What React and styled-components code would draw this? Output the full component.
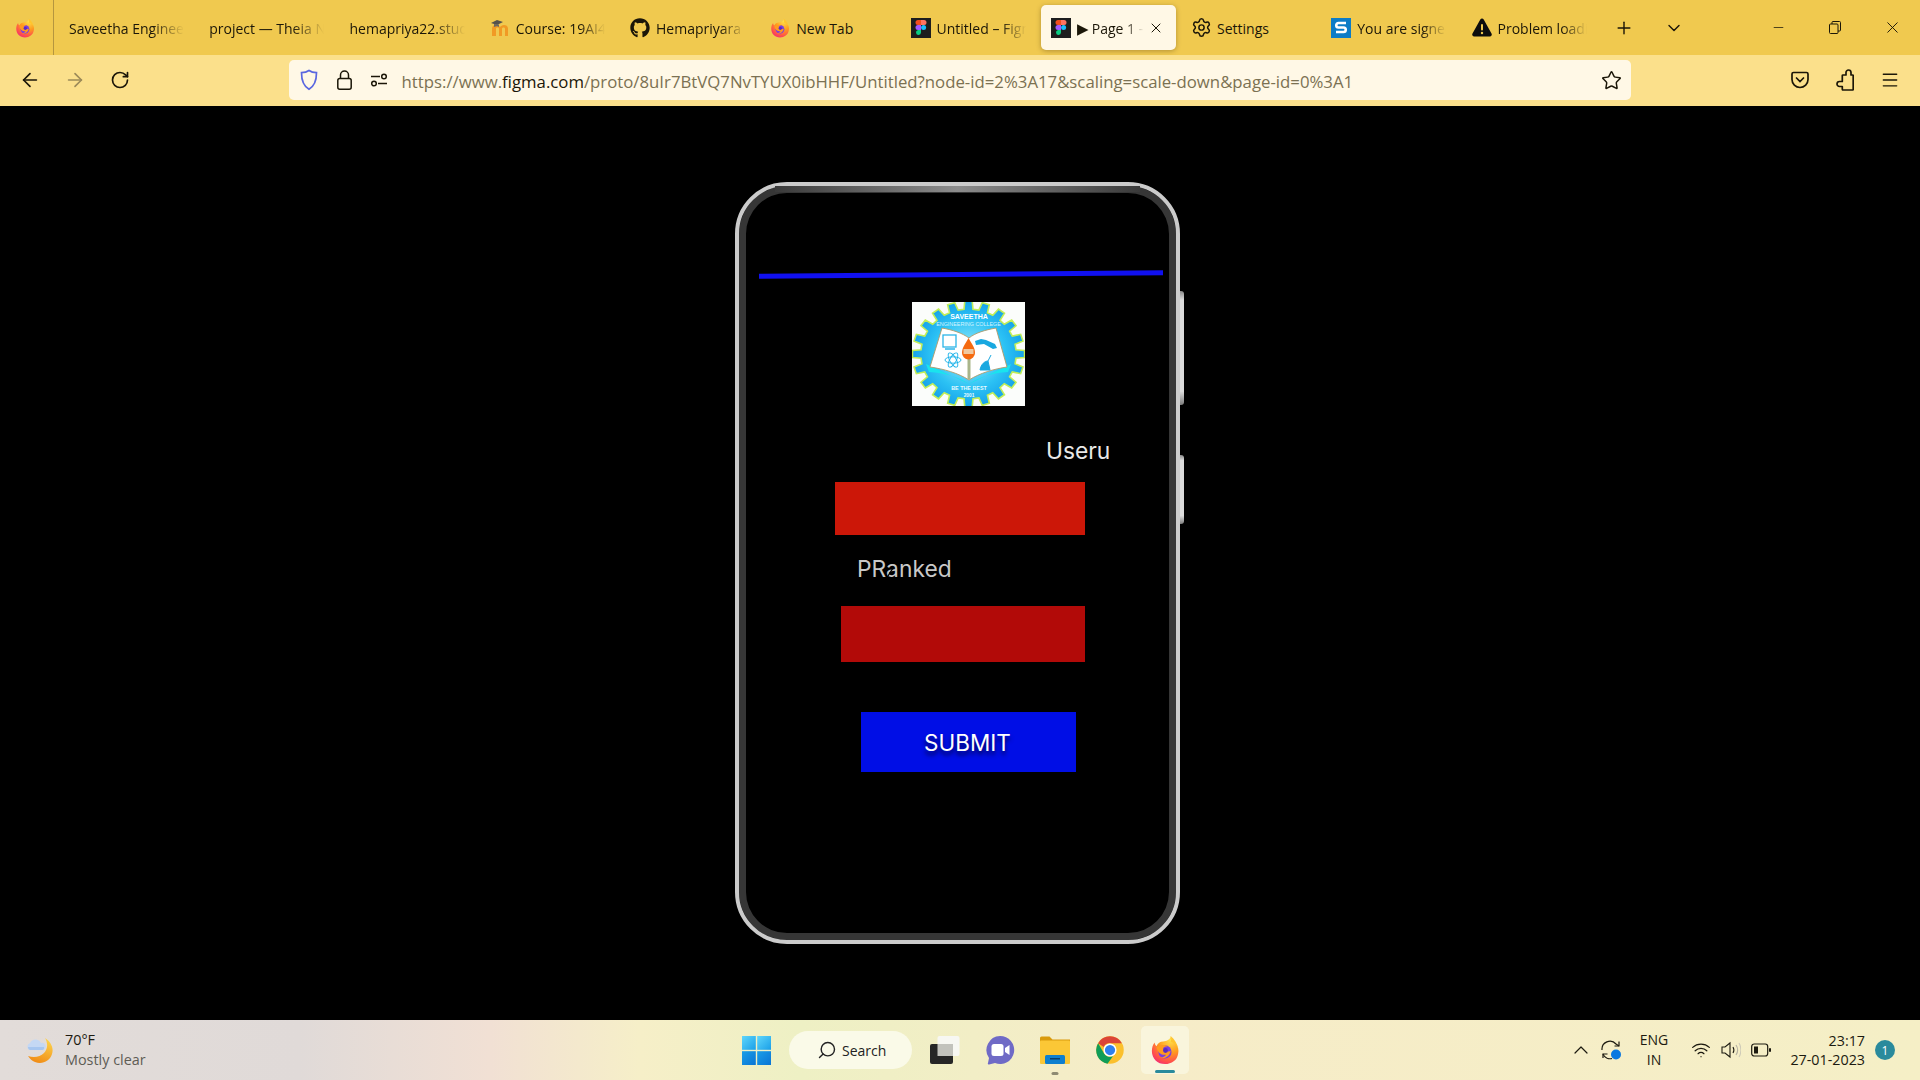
import React from "react";
import styled, { createGlobalStyle } from "styled-components";
import { ArrowLeft, ArrowRight, RotateCw, Star, Menu, Plus, ChevronDown, ChevronUp, Minus, X, Settings, Search, Wifi } from "lucide-react";
import { FaGithub } from "react-icons/fa";

const Global = createGlobalStyle`
  html, body { margin: 0; padding: 0; background: #000; }
  * { box-sizing: border-box; }
  body { font-family: "Open Sans", "Noto Sans", sans-serif; }
  svg { flex: none; }
`;

const Page = styled.div`
  width: 1920px; height: 1080px; display: flex; flex-direction: column; overflow: hidden; background: #000;
`;

/* ---------- browser chrome ---------- */
const TabBar = styled.div`
  height: 55px; flex: none; display: flex; align-items: center; background: #f0c94f; color: #1b1608;
`;
const FirefoxSlot = styled.div`
  width: 54px; height: 55px; flex: none; display: flex; align-items: center; justify-content: center;
  border-right: 1px solid #b5963f; padding-right: 4px;
`;
const TabStrip = styled.div`
  display: flex; gap: 5.25px; margin-left: 5px; height: 45px;
`;
const Tab = styled.div`
  width: 135px; height: 45px; flex: none; display: flex; align-items: center; gap: 6px; padding: 0 10px;
  font-size: 14px; border-radius: 5px; white-space: nowrap;
  background: ${p => (p.$active ? "#fff8e6" : "transparent")};
  box-shadow: ${p => (p.$active ? "0 1px 5px rgba(60,40,0,.35)" : "none")};
`;
const FavSlot = styled.span`
  width: 20px; height: 20px; flex: none; display: flex; align-items: center; justify-content: center;
`;
const TabLabel = styled.span`
  flex: 1; min-width: 0; overflow: hidden; line-height: 20px; position: relative; top: 1px;
  mask-image: ${p => (p.$clear ? "none" : "linear-gradient(to right, #000 72%, transparent 100%)")};
`;
const PlayGlyph = styled.span`
  font-size: 15px; margin-right: 3px;
`;
const TabClose = styled.span`
  width: 16px; flex: none; display: flex; align-items: center; justify-content: center; margin: 0 2px 0 -2px;
`;
const StripButton = styled.div`
  width: ${p => p.$w}px; margin-left: ${p => p.$ml || 0}px; height: 40px; flex: none; display: flex; align-items: center; justify-content: center;
`;
const NavBar = styled.div`
  height: 51px; flex: none; display: flex; align-items: flex-start; padding: 5px 7.5px 0; background: #fbe08b; color: #1b1608;
`;
const NavButton = styled.div`
  width: 45px; height: 40px; flex: none; display: flex; align-items: center; justify-content: center;
  color: ${p => (p.$dim ? "#9c8a58" : "#1b1608")};
`;
const UrlBar = styled.div`
  width: 1342px; height: 40px; margin-left: 146px; flex: none; display: flex; align-items: center;
  background: #fff8e6; border-radius: 5px; padding-left: 11px;
`;
const UrlIcon = styled.span`
  width: ${p => p.$w}px; margin-right: ${p => p.$mr}px; flex: none; display: flex; align-items: center; justify-content: center;
`;
const UrlText = styled.div`
  font-size: 16.77px; color: #7b7152; white-space: nowrap; flex: 1; position: relative; top: 1px;
  b { font-weight: 400; color: #1b1608; }
`;
const StarSlot = styled.span`
  width: 22px; margin-right: 8px; flex: none; display: flex; justify-content: center;
`;
const NavRight = styled.div`
  display: flex; margin-left: 146.5px;
`;

/* ---------- page ---------- */
const Stage = styled.main`
  flex: 1; min-height: 0; background: #000; padding: 76px 0 0 735px;
`;
const Phone = styled.div`
  position: relative; width: 445px; height: 762px; display: flex; flex-direction: column; align-items: flex-start;
  border: 4px solid #cbcbcb; border-radius: 52px; background: #000;
  box-shadow: inset 0 0 0 7px #363636;
  &::before {
    content: ""; position: absolute; top: 0; left: 36px; right: 36px; height: 6px;
    background: linear-gradient(90deg, #3a3a3a, #8c8c8c 50%, #3a3a3a);
  }
`;
const SideKey = styled.span`
  position: absolute; left: 441px; top: ${p => p.$top}px; width: 4px; height: ${p => p.$h}px;
  background: linear-gradient(180deg, #8a8a8a, #dcdcdc 8%, #dcdcdc 88%, #7c7c7c);
  border-radius: 0 3px 3px 0;
`;
const TopLine = styled.div`
  width: 404px; height: 5px; margin: 86px 0 0 20px; background: #1010f0; transform: rotate(-0.48deg); flex: none;
`;
const Logo = styled.svg`
  width: 113px; height: 104px; margin: 25px 0 0 173px; flex: none; display: block; background: #fbfdfb;
`;
const FieldLabel = styled.div`
  font-family: Inter, "Open Sans", sans-serif; font-size: 22.8px; line-height: 28px; flex: none;
  color: ${p => p.$c}; margin: ${p => p.$mt}px 0 0 ${p => p.$ml}px; position: relative;
`;
const CursorMark = styled.svg`
  position: absolute; left: 30px; top: 11px; width: 7px; height: 11px;
`;
const Field = styled.div`
  flex: none; background: ${p => p.$c}; width: ${p => p.$w}px; height: ${p => p.$h}px; margin: ${p => p.$mt}px 0 0 ${p => p.$ml}px;
`;
const Submit = styled.div`
  width: 215px; height: 60px; flex: none; margin: 50px 0 0 122px; background: #000ee6; color: #fff;
  display: flex; align-items: center; justify-content: center; padding-right: 2px;
  font-family: Inter, "Open Sans", sans-serif; font-size: 22.5px; text-shadow: 0 4px 4px rgba(0,0,40,.8);
`;

/* ---------- taskbar ---------- */
const Taskbar = styled.footer`
  height: 60px; flex: none; display: flex; align-items: center; color: #1c1a10;
  background: linear-gradient(90deg, #e2dcd9 0, #e0dad8 300px, #f1e0d4 490px, #f6efc8 640px, #eef0c4 800px, #f6ecc8 1150px, #f5efc6 1920px);
`;
const Weather = styled.div`
  width: 742px; flex: none; padding-left: 26px; display: flex; align-items: center; gap: 11px;
`;
const WeatherText = styled.div`
  font-size: 14.4px; line-height: 20px; color: #1c1a10;
  small { display: block; font-size: 14.4px; color: #5e5c55; }
`;
const WinLogo = styled.svg`
  width: 29px; height: 29px; flex: none; display: block;
`;
const SearchPill = styled.div`
  width: 123px; height: 38px; margin: 0 9px 0 18px; flex: none; display: flex; align-items: center; gap: 5px; padding-left: 28px;
  background: #fafae8; border-radius: 19px; font-size: 14px; color: #222;
`;
const Pinned = styled.div`
  display: flex; gap: 7px;
`;
const PinSlot = styled.div`
  position: relative; width: 48px; height: 48px; display: flex; align-items: center; justify-content: center; border-radius: 5px;
  background: ${p => (p.$active ? "#f9f5dc" : "transparent")};
`;
const RunMark = styled.span`
  position: absolute; left: 50%; bottom: ${p => (p.$active ? 1 : -1)}px; transform: translateX(-50%);
  width: ${p => (p.$active ? 20 : 7)}px; height: 3px; border-radius: 2px; background: ${p => (p.$active ? "#2a8a9c" : "#8e8a72")};
`;
const Tray = styled.div`
  margin-left: auto; display: flex; align-items: center; padding-right: 25px;
`;
const TrayIcon = styled.span`
  width: ${p => p.$w || 20}px; margin-right: ${p => p.$mr}px; flex: none; display: flex; align-items: center; justify-content: center;
`;
const Lang = styled.div`
  width: 28px; margin-right: 23px; text-align: center; font-size: 14px; line-height: 20px; white-space: nowrap; display: flex; flex-direction: column; align-items: center;
`;
const Clock = styled.div`
  width: 74px; margin-right: 10px; text-align: right; font-size: 14.3px; line-height: 19px; white-space: nowrap;
  display: flex; flex-direction: column; align-items: flex-end;
`;
const Badge = styled.span`
  width: 20px; height: 20px; border-radius: 50%; background: #2a8a9c; color: #fff; font-size: 12px; display: flex; align-items: center; justify-content: center;
`;

/* ---------- drawings ---------- */
const Firefox = ({ s = 20 }) => {
  const id = `ff${s}`;
  return (
    <svg width={s} height={s} viewBox="0 0 32 32">
      <defs>
        <radialGradient id={id} cx="0.7" cy="0.15" r="1">
          <stop offset="0" stopColor="#ffe04a" />
          <stop offset="0.45" stopColor="#ff9a1e" />
          <stop offset="0.8" stopColor="#ff4a50" />
          <stop offset="1" stopColor="#e8208a" />
        </radialGradient>
      </defs>
      <path d="M22 1c1 3 3 4 5 7 3 4 4 8 3 12-1 7-7 11-14 11C8 31 2 25 2 17c0-3 1-7 3-9 0 2 1 3 2 4 1-3 4-5 7-5 4-1 8-2 8-6z" fill={`url(#${id})`} />
      <path d="M22 1c4 3 7 8 8 13-2-4-5-6-8-7 1-2 1-4 0-6z" fill="#ffc52e" />
      <circle cx="16" cy="18" r="7" fill="#7a3fe0" />
      <path d="M7 13c3-3 9-3 12-1-3 0-5 1-5 3 0 3 5 3 8 2-1 6-7 9-11 7 3 0 5-1 6-3-4 1-9-2-10-8z" fill="#ff9a1e" />
      <circle cx="16.500" cy="16.500" r="2.600" fill="#5a2bc0" />
    </svg>
  );
};

const FigmaIcon = () => (
  <svg width="20" height="20" viewBox="0 0 20 20">
    <rect width="20" height="20" fill="#1e1e1e" />
    <path d="M7 2h3v5H7a2.500 2.500 0 0 1 0-5z" fill="#f24e1e" />
    <path d="M10 2h3a2.500 2.500 0 0 1 0 5h-3z" fill="#ff7262" />
    <path d="M7 7h3v5H7a2.500 2.500 0 0 1 0-5z" fill="#a259ff" />
    <circle cx="12.600" cy="9.500" r="2.500" fill="#1abcfe" />
    <path d="M7 12h3v2.500a2.500 2.500 0 1 1-3-2.500z" fill="#0acf83" />
  </svg>
);

const MoodleIcon = () => (
  <svg width="20" height="18" viewBox="0 0 20 18">
    <path d="M2 17V9.500C2 7 4 6 6 6s3 1 4 2c1-1 2-2 4-2s4 1 4 3.500V17h-3V10c0-1-.5-1.500-1.500-1.500S12 9 12 10v7H9v-7c0-1-.5-1.500-1.500-1.500S6 9 6 10v7z" fill="#f19a24" />
    <path d="M1 4l6-3 6 2-6 3z" fill="#55524c" />
    <path d="M4 5v3c2-1 4-1 5 0V5.500z" fill="#6b6760" />
  </svg>
);

const SIcon = () => (
  <svg width="20" height="20" viewBox="0 0 20 20">
    <rect width="20" height="20" fill="#0d7cc6" />
    <path d="M15 5H7.500a2 2 0 0 0 0 4.500h5a2 2 0 0 1 0 4.500H5" fill="none" stroke="#fff" strokeWidth="2.600" />
  </svg>
);

const AlertIcon = () => (
  <svg width="20" height="19" viewBox="0 0 20 19">
    <path d="M8.300 1.500a2 2 0 0 1 3.400 0l7.800 14a2 2 0 0 1-1.700 3H2.200a2 2 0 0 1-1.700-3z" fill="#0d0d0d" />
    <rect x="9" y="6" width="2" height="6.500" rx="1" fill="#f0c94f" />
    <circle cx="10" cy="15" r="1.200" fill="#f0c94f" />
  </svg>
);

const PermIcon = () => (
  <svg width="18" height="14" viewBox="0 0 18 14" fill="none" stroke="#1b1608" strokeWidth="1.500">
    <path d="M1 3.500h9" />
    <circle cx="14" cy="3.500" r="2.300" />
    <circle cx="4" cy="10.500" r="2.300" />
    <path d="M8 10.500h9" />
  </svg>
);

const ShieldIcon = () => (
  <svg width="18" height="22" viewBox="0 0 18 22" fill="none" stroke="#5a67e0" strokeWidth="1.700">
    <path d="M9 1.500c2 1.500 5 2.200 7.500 2.200 0 7-1.500 13-7.500 16.500C3 16.700 1.500 10.700 1.500 3.700 4 3.700 7 3 9 1.500z" />
  </svg>
);

const LockIcon = () => (
  <svg width="15" height="20" viewBox="0 0 15 20" fill="none" stroke="#1b1608" strokeWidth="1.500">
    <rect x="0.800" y="8.500" width="13.400" height="10.700" rx="2" />
    <path d="M3.500 8.500V5a4 4 0 0 1 8 0v3.500" />
  </svg>
);

const PocketIcon = () => (
  <svg width="20" height="20" viewBox="0 0 20 20" fill="none" stroke="#1b1608" strokeWidth="1.700">
    <path d="M3.500 2.500h13a1.500 1.500 0 0 1 1.500 1.500v5.500a8 8 0 0 1-16 0V4a1.500 1.500 0 0 1 1.500-1.500z" />
    <path d="M6.500 8l3.500 3.500L13.500 8" strokeLinecap="round" />
  </svg>
);

const ExtensionIcon = () => (
  <svg width="18" height="22" viewBox="0 0 18 22" fill="none" stroke="#1b1608" strokeWidth="1.700" strokeLinejoin="round">
    <path d="M7 6h3V3.500a2.500 2.500 0 0 1 5 0V6h1.500a.7.7 0 0 1 .7.700V20.300a.7.7 0 0 1-.7.700H7a.7.7 0 0 1-.7-.7V17.500H3.500a2.500 2.500 0 0 1 0-5h2.800V6.700A.7.7 0 0 1 7 6z" />
  </svg>
);

const RestoreIcon = () => (
  <svg width="12" height="13" viewBox="0 0 12 13" fill="none" stroke="#1b1608" strokeWidth="1">
    <rect x="0.500" y="3" width="8.500" height="9.500" rx="1" />
    <path d="M3 3V1.500a1 1 0 0 1 1-1h6.500a1 1 0 0 1 1 1V9a1 1 0 0 1-1 1H9" />
  </svg>
);

const CollegeLogo = () => {
  const cx = 56.5, cy = 52, n = 20;
  const pts = [];
  for (let i = 0; i < n; i++) {
    const a = (i / n) * Math.PI * 2, w = Math.PI / n;
    const at = (r, t) => `${cx + Math.cos(t) * r * 1.06},${cy + Math.sin(t) * r}`;
    pts.push(at(45, a - w * 0.6), at(53, a - w * 0.42), at(53, a + w * 0.42), at(45, a + w * 0.6));
  }
  const gear = pts.join(" ");
  return (
    <Logo viewBox="0 0 113 104">
      <defs>
        <radialGradient id="gearFill" cx="0.5" cy="0.5" r="0.55">
          <stop offset="0" stopColor="#a8eefc" />
          <stop offset="0.6" stopColor="#2cc2f4" />
          <stop offset="1" stopColor="#109ae8" />
        </radialGradient>
      </defs>
      <polygon points={gear} fill="url(#gearFill)" stroke="#c2ee58" strokeWidth="1.600" />
      <text x="57" y="16.500" textAnchor="middle" fontFamily="Liberation Sans, sans-serif" fontWeight="700" fontSize="7" fill="#fff">SAVEETHA</text>
      <text x="56.500" y="24" textAnchor="middle" fontFamily="Liberation Sans, sans-serif" fontSize="5.400" fill="#d6f4ff">ENGINEERING COLLEGE</text>
      <path d="M14 62L57 82L99 62L96 70C80 71 67 75 57 82C47 75 33 71 17 70z" fill="#19e4ee" />
      <path d="M18 65c14 2 28 6 39 13 11-7 25-11 38-13L84 26c-11 2-21 5-27 10-7-5-16-8-27-10z" fill="#fff" stroke="#b09a6a" strokeWidth="0.900" />
      <rect x="55.500" y="52" width="3" height="25" fill="#a9b58a" />
      <path d="M56.500 36c3 6 6.500 9 6.500 15a6.500 6.500 0 0 1-13 0C50 45 53.500 42 56.500 36z" fill="#f56a10" />
      <rect x="51.500" y="47" width="10" height="5" fill="#f0c9a0" />
      <rect x="31" y="33" width="13" height="12" fill="none" stroke="#2bb5e8" strokeWidth="1.300" />
      <path d="M33 47h10" stroke="#2bb5e8" strokeWidth="1.500" />
      <g fill="none" stroke="#18b0e8" strokeWidth="0.900">
        <ellipse cx="41" cy="58" rx="8" ry="3.200" />
        <ellipse cx="41" cy="58" rx="8" ry="3.200" transform="rotate(60 41 58)" />
        <ellipse cx="41" cy="58" rx="8" ry="3.200" transform="rotate(120 41 58)" />
      </g>
      <path d="M63 39l6-2 5 1 9 4 2 4-4 1-9-5-8 1z" fill="#19a8e0" />
      <path d="M68 68c1-6 5-9 8-9l2 9z M76 59l3-6" fill="#19a8e0" stroke="#19a8e0" strokeWidth="1" />
      <text x="57" y="87.500" textAnchor="middle" fontFamily="Liberation Sans, sans-serif" fontWeight="700" fontSize="5.400" fill="#e8fbff">BE THE BEST</text>
      <text x="57" y="94.500" textAnchor="middle" fontFamily="Liberation Sans, sans-serif" fontWeight="700" fontSize="4.800" fill="#e8fbff">2001</text>
    </Logo>
  );
};

const WeatherIcon = () => (
  <svg width="28" height="28" viewBox="0 0 28 28">
    <defs>
      <linearGradient id="moon" x1="0.700" y1="0" x2="0.300" y2="1">
        <stop offset="0" stopColor="#fcd34d" />
        <stop offset="1" stopColor="#f08a14" />
      </linearGradient>
    </defs>
    <path d="M19 2c6 4 9 10 7 16-2 7-10 11-17 8-3-1-5-3-7-6 6 2 12 1 16-3 4-4 4-10 1-15z" fill="url(#moon)" />
    <path d="M3 14a4 4 0 0 1 1-7 6 6 0 0 1 11 0 3.500 3.500 0 0 1 2 7z" fill="#c4d8f4" />
    <path d="M2 11h16v1.500a2 2 0 0 1-2 1.500H4a3 3 0 0 1-2-3z" fill="#a6c6f0" />
  </svg>
);

const WinPane = ({ x, y, f }) => <rect x={x} y={y} width="13.800" height="13.800" fill={f} />;
const Windows = () => (
  <WinLogo viewBox="0 0 29 29">
    <defs>
      <linearGradient id="winA" x1="0" y1="0" x2="1" y2="1">
        <stop offset="0" stopColor="#5fd6fb" />
        <stop offset="1" stopColor="#1a9fe8" />
      </linearGradient>
      <linearGradient id="winB" x1="0" y1="0" x2="1" y2="1">
        <stop offset="0" stopColor="#1a9fe8" />
        <stop offset="1" stopColor="#0a74d4" />
      </linearGradient>
    </defs>
    <WinPane x="0" y="0" f="url(#winA)" />
    <WinPane x="15.200" y="0" f="url(#winA)" />
    <WinPane x="0" y="15.200" f="url(#winB)" />
    <WinPane x="15.200" y="15.200" f="url(#winB)" />
  </WinLogo>
);

const TaskView = () => (
  <svg width="30" height="28" viewBox="0 0 30 28">
    <rect x="7.500" y="0" width="22" height="20" rx="2" fill="#f7f7f2" />
    <rect x="0" y="8" width="23" height="20" rx="2" fill="#262626" />
    <rect x="7.500" y="8" width="15.500" height="12" fill="#c2c2bc" />
  </svg>
);

const ChatIcon = () => (
  <svg width="30" height="30" viewBox="0 0 30 30">
    <path d="M15 1a14 14 0 1 1-5 27l-6 1.500c-1 0-1.500-.5-1-1.500l1-5A14 14 0 0 1 15 1z" fill="#6f6ac6" />
    <rect x="6.500" y="9" width="12" height="12" rx="2.500" fill="#fff" />
    <path d="M20 13l4.500-3v10L20 17z" fill="#fff" />
  </svg>
);

const FolderIcon = () => (
  <svg width="30" height="28" viewBox="0 0 30 28">
    <path d="M0 2a1.500 1.500 0 0 1 1.500-1.500h8l3 3h17.500V10H0z" fill="#d99a0c" />
    <rect x="0" y="4.500" width="30" height="23.500" rx="1" fill="#fbc736" />
    <rect x="5" y="19" width="20" height="9" rx="1.500" fill="#0f7fcf" />
    <rect x="10" y="22" width="10" height="1.500" fill="#083f6e" />
  </svg>
);

const Chrome = () => (
  <svg width="30" height="30" viewBox="0 0 48 48">
    <circle cx="24" cy="24" r="22" fill="#fbc02d" />
    <path d="M24 2A22 22 0 0 1 43 13H24a11 11 0 0 0-10 6L5 13A22 22 0 0 1 24 2z" fill="#db4437" />
    <path d="M5 13l9.500 16.500A11 11 0 0 0 29 33.500L20 46A22 22 0 0 1 5 13z" fill="#0f9d58" />
    <circle cx="24" cy="24" r="10.500" fill="#fff" />
    <circle cx="24" cy="24" r="8.200" fill="#2f80ed" />
  </svg>
);

const SyncIcon = () => (
  <svg width="20" height="20" viewBox="0 0 20 20">
    <g fill="none" stroke="#1c1a10" strokeWidth="1.200">
      <path d="M1 10A8 8 0 0 1 15 4l3 2" />
      <path d="M18 1.500V6h-4.500" />
      <path d="M2 18v-4h4.500" />
      <path d="M2 14a8 8 0 0 0 9 4.500" />
    </g>
    <circle cx="15" cy="14.500" r="5" fill="#0a78e0" />
  </svg>
);

const VolumeIcon = () => (
  <svg width="20" height="18" viewBox="0 0 20 18" fill="none" stroke="#1c1a10" strokeWidth="1.100">
    <path d="M1 6h3l5-4v14l-5-4H1z" />
    <path d="M12 6c1.200 2 1.200 4 0 6" />
    <path d="M15 4c2 3 2 7 0 10" stroke="#b4b0a0" />
    <path d="M18 2c2.500 4 2.500 10 0 14" stroke="#cfcbb8" />
  </svg>
);

const BatteryIcon = () => (
  <svg width="20" height="14" viewBox="0 0 20 14">
    <rect x="0.700" y="1" width="16" height="12" rx="2.500" fill="none" stroke="#1c1a10" strokeWidth="1.200" />
    <rect x="3" y="3.500" width="4" height="7" fill="#1c1a10" />
    <rect x="18" y="5" width="2" height="4" rx="1" fill="#1c1a10" />
  </svg>
);

const tabs = [
  { label: "Saveetha Engineering" },
  { label: "project — Theia Now" },
  { label: "hemapriya22.studio" },
  { icon: <MoodleIcon />, label: "Course: 19AI414" },
  { icon: <FaGithub size={20} color="#1b1608" />, label: "Hemapriyara" },
  { icon: <Firefox />, label: "New Tab", clear: true },
  { icon: <FigmaIcon />, label: "Untitled – Figma" },
  { icon: <FigmaIcon />, label: <><PlayGlyph>▶</PlayGlyph>Page 1 - Untitled</>, active: true },
  { icon: <Settings size={21} strokeWidth={1.7} />, label: "Settings", clear: true },
  { icon: <SIcon />, label: "You are signed in" },
  { icon: <AlertIcon />, label: "Problem loading" },
];

export default function App() {
  return (
    <Page>
      <Global />
      <TabBar>
        <FirefoxSlot><Firefox /></FirefoxSlot>
        <TabStrip>
          {tabs.map((t, i) => (
            <Tab key={i} $active={t.active}>
              {t.icon && <FavSlot>{t.icon}</FavSlot>}
              <TabLabel $clear={t.clear}>{t.label}</TabLabel>
              {t.active && <TabClose><X size={16} strokeWidth={1.5} /></TabClose>}
            </Tab>
          ))}
        </TabStrip>
        <StripButton $w={40} $ml={7}><Plus size={20} strokeWidth={1.7} /></StripButton>
        <StripButton $w={20} $ml={20}><ChevronDown size={20} strokeWidth={1.7} /></StripButton>
        <StripButton $w={20} $ml={85}><Minus size={15} strokeWidth={1.2} /></StripButton>
        <StripButton $w={20} $ml={36}><RestoreIcon /></StripButton>
        <StripButton $w={20} $ml={38}><X size={19} strokeWidth={1.2} /></StripButton>
      </TabBar>
      <NavBar>
        <NavButton><ArrowLeft size={22} strokeWidth={1.8} /></NavButton>
        <NavButton $dim><ArrowRight size={22} strokeWidth={1.8} /></NavButton>
        <NavButton><RotateCw size={20} strokeWidth={2} /></NavButton>
        <UrlBar>
          <UrlIcon $w={18} $mr={19}><ShieldIcon /></UrlIcon>
          <UrlIcon $w={15} $mr={18}><LockIcon /></UrlIcon>
          <UrlIcon $w={18} $mr={14}><PermIcon /></UrlIcon>
          <UrlText>https://www.<b>figma.com</b>/proto/8uIr7BtVQ7NvTYUX0ibHHF/Untitled?node-id=2%3A17&amp;scaling=scale-down&amp;page-id=0%3A1</UrlText>
          <StarSlot><Star size={21} strokeWidth={1.7} /></StarSlot>
        </UrlBar>
        <NavRight>
          <NavButton><PocketIcon /></NavButton>
          <NavButton><ExtensionIcon /></NavButton>
          <NavButton><Menu size={20} strokeWidth={1.7} /></NavButton>
        </NavRight>
      </NavBar>

      <Stage>
        <Phone>
          <SideKey $top={105} $h={114} />
          <SideKey $top={269} $h={69} />
          <TopLine />
          <CollegeLogo />
          <FieldLabel $c="#e8e8e8" $ml={307} $mt={31}>Useru</FieldLabel>
          <Field $c="#cc1708" $w={250} $h={53} $ml={96} $mt={16.5} />
          <FieldLabel $c="#c8c8c8" $ml={118} $mt={20.5}>
            PRanked
            <CursorMark viewBox="0 0 7 11"><path d="M1 10L6 2" stroke="#000" strokeWidth="1.400" /></CursorMark>
          </FieldLabel>
          <Field $c="#b20a08" $w={244} $h={56} $ml={102} $mt={23} />
          <Submit>SUBMIT</Submit>
        </Phone>
      </Stage>

      <Taskbar>
        <Weather>
          <WeatherIcon />
          <WeatherText>70°F<small>Mostly clear</small></WeatherText>
        </Weather>
        <Windows />
        <SearchPill><Search size={20} strokeWidth={1.7} style={{ transform: "scaleX(-1)" }} />Search</SearchPill>
        <Pinned>
          <PinSlot><TaskView /></PinSlot>
          <PinSlot><ChatIcon /></PinSlot>
          <PinSlot><FolderIcon /><RunMark /></PinSlot>
          <PinSlot><Chrome /></PinSlot>
          <PinSlot $active><Firefox s={30} /><RunMark $active /></PinSlot>
        </Pinned>
        <Tray>
          <TrayIcon $w={16} $mr={12}><ChevronUp size={24} strokeWidth={1.2} /></TrayIcon>
          <TrayIcon $mr={19}><SyncIcon /></TrayIcon>
          <Lang><span>ENG</span><span>IN</span></Lang>
          <TrayIcon $mr={10}><Wifi size={20} strokeWidth={1.5} /></TrayIcon>
          <TrayIcon $mr={10}><VolumeIcon /></TrayIcon>
          <TrayIcon $mr={20}><BatteryIcon /></TrayIcon>
          <Clock><span>23:17</span><span>27-01-2023</span></Clock>
          <Badge>1</Badge>
        </Tray>
      </Taskbar>
    </Page>
  );
}
